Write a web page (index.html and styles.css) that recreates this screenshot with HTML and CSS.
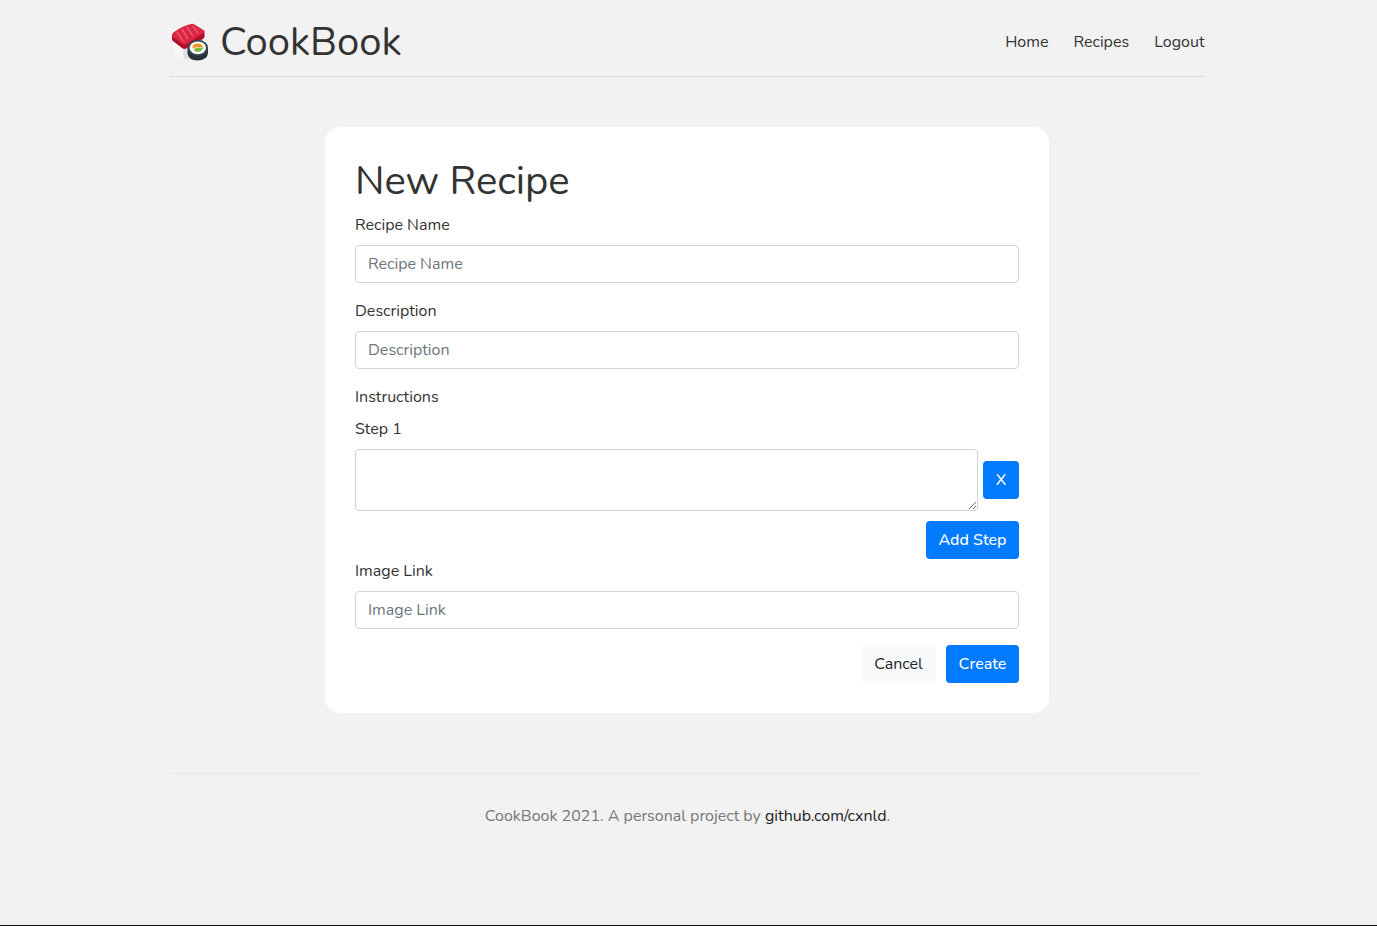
FILE: index.html
```html
<!DOCTYPE html>
<html lang="en">
<head>
<meta charset="utf-8">
<title>CookBook</title>
<link rel="stylesheet" href="styles.css">
</head>
<body>
<div class="page">
  <header class="header">
    <a class="brand" href="#">
      <svg class="logo" viewBox="0 0 40 40" aria-hidden="true">
        <path fill="#f7f7f7" d="M4 21 L14 26 V37 Q7 35 4.500 29 Z"/>
        <path fill="#dcdfe2" d="M13 26 L22 22 V36 L14 37 Z"/>
        <path fill="#b20d2b" d="M2 13 L34.500 9 V14.500 Q34.500 16 33 17 L16 26.500 Q14 27.500 12 26 L3 19 Q2 18 2 17 Z"/>
        <path fill="#dc2744" d="M2 13 Q2 11.500 4 10 Q12 4 21 2 Q23 1.500 24.500 2.500 L33.500 8 Q35.500 9.500 33.500 11 L16 22 Q14 23 12.500 22 L3 15 Q2 14 2 13 Z"/>
        <path fill="none" stroke="#e8697e" stroke-width="1.200" stroke-linecap="round" d="M7 10 L13 19 M12 7 L17.500 16.500 M17 4.800 L22.500 13.500 M22.500 4 L28 11"/>
        <path fill="#263238" d="M17.500 25.500 V31 Q18 38.500 28 38.500 Q37.500 38 38 31 V25.500 Z"/>
        <ellipse cx="27.800" cy="25.800" rx="10.300" ry="8" fill="#37474f"/>
        <ellipse cx="27.800" cy="25.800" rx="8.300" ry="6.400" fill="#fafafa"/>
        <path fill="#f79320" d="M22.500 26.500 Q22 21.600 28 21.600 Q33 22.300 33 25.800 Q27 23.800 22.500 26.500 Z"/>
        <path fill="#7cbd42" d="M23.500 27.300 Q28 24.300 33 26.300 Q31 30.300 27 30 Q24.500 29.600 23.500 27.300 Z"/>
      </svg>
      <span class="brand-name">CookBook</span>
    </a>
    <nav class="nav">
      <a href="#">Home</a>
      <a href="#">Recipes</a>
      <a href="#">Logout</a>
    </nav>
  </header>
  <main class="card">
    <h1 class="title">New Recipe</h1>
    <form>
      <div class="group">
        <label for="name">Recipe Name</label>
        <input class="control" id="name" type="text" placeholder="Recipe Name">
      </div>
      <div class="group">
        <label for="description">Description</label>
        <input class="control" id="description" type="text" placeholder="Description">
      </div>
      <label>Instructions</label>
      <label for="step1">Step 1</label>
      <div class="step">
        <textarea class="control step-text" id="step1"></textarea>
        <button class="btn btn-remove" type="button">X</button>
      </div>
      <div class="actions">
        <button class="btn btn-add" type="button">Add Step</button>
      </div>
      <div class="group">
        <label for="image">Image Link</label>
        <input class="control" id="image" type="text" placeholder="Image Link">
      </div>
      <div class="actions">
        <button class="btn btn-light" type="button">Cancel</button>
        <button class="btn btn-create" type="button">Create</button>
      </div>
    </form>
  </main>
  <footer class="footer">
    <span class="credit">CookBook 2021. A personal project by <a href="#">github.com/cxnld</a>.</span>
  </footer>
</div>
</body>
</html>
```
FILE: styles.css
```css
*, *::before, *::after { box-sizing: border-box; }
body {
  margin: 0;
  min-height: 926px;
  background: #f2f2f2;
  border-bottom: 1px solid #111;
  color: #333;
  font: 400 16px/24px Nunito, Lato, sans-serif;
}
a { color: inherit; text-decoration: none; }
.page { width: 1035px; margin-left: 170px; }
.header {
  display: flex;
  justify-content: space-between;
  align-items: center;
  height: 77px;
  padding: 8px 0;
  border-bottom: 1px solid #dcdcdc;
}
.brand { display: flex; align-items: center; gap: 10px; margin-top: 7px; }
.logo { width: 40px; height: 40px; }
.brand-name, .title { font-size: 40px; line-height: 48px; font-weight: 400; }
.nav { display: flex; gap: 25px; margin: 7px .5px 0 0; }
.card {
  width: 724px;
  height: 586px;
  margin: 50px 0 0 155px;
  padding: 30px;
  background: #fff;
  border-radius: 15px;
}
.title { margin: 0 0 8px; }
label { display: block; margin-bottom: 8px; }
.group { margin-bottom: 16px; }
.control {
  display: block;
  width: 100%;
  height: 38px;
  padding: 6px 12px;
  border: 1px solid #ced4da;
  border-radius: 4px;
  background: #fff;
  color: #495057;
  font: inherit;
}
.control::placeholder { color: #6c757d; opacity: 1; }
.step { display: flex; align-items: center; gap: 5px; margin-bottom: 10px; }
.step-text { flex: 1; height: 62px; resize: vertical; }
.actions { display: flex; justify-content: flex-end; gap: 10px; }
.btn {
  height: 38px;
  padding: 0;
  border: 0;
  border-radius: 4px;
  background: #007bff;
  color: #fff;
  font: inherit;
  font-weight: 500;
}
.btn-remove { width: 36px; }
.btn-add { width: 93px; }
.btn-light { width: 75px; background: #f8f9fa; color: #212529; font-weight: 400; }
.btn-create { width: 73px; }
.footer {
  margin-top: 60px;
  padding-top: 30px;
  border-top: 1px solid #e8e8e8;
  color: #777;
  text-align: center;
}
.footer a { color: #222; }
```
